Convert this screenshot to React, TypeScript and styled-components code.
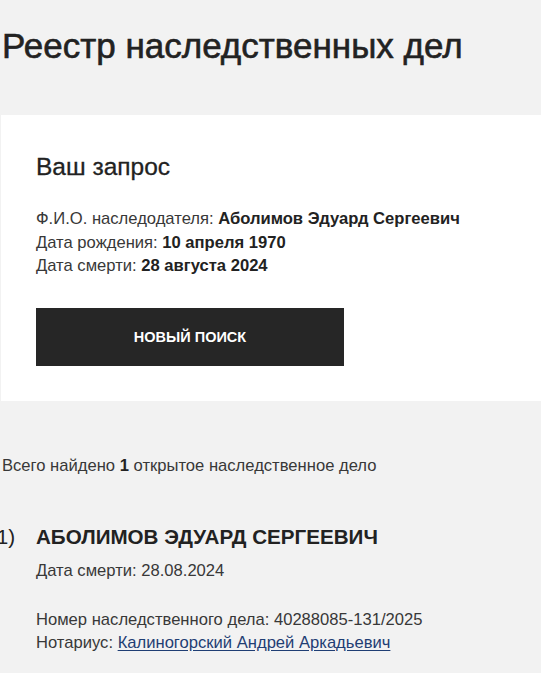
import React from "react";
import styled, { createGlobalStyle } from "styled-components";

const GlobalStyle = createGlobalStyle`
  html, body {
    margin: 0;
    padding: 0;
    background: #f2f2f2;
    font-family: "Liberation Sans", Arial, sans-serif;
    color: #222;
  }
  * { box-sizing: border-box; }
`;

const Page = styled.main`
  padding: 0 0 0 2px;
  overflow: hidden;
`;

const Title = styled.h1`
  margin: 0;
  padding-top: 26px;
  font-size: 35px;
  font-weight: 500;
  line-height: 40px;
  color: #222;
  -webkit-text-stroke: 0.6px #222;
`;

const Card = styled.section`
  margin: 49px 0 0 -1px;
  background: #fff;
  padding: 37px 35px 35px 35px;
`;

const CardTitle = styled.h2`
  margin: 0;
  font-size: 24.5px;
  font-weight: 400;
  line-height: 30px;
  color: #222;
  -webkit-text-stroke: 0.3px #222;
`;

const InfoList = styled.div`
  margin-top: 25px;
  font-size: 16.6px;
  line-height: 23.5px;
  color: #383838;
`;

const InfoLine = styled.div`
  b {
    font-weight: 700;
    color: #222;
  }
`;

const Button = styled.button`
  display: block;
  margin-top: 30px;
  width: 308px;
  height: 58px;
  border: 0;
  background: #262626;
  color: #fff;
  font-family: "Liberation Sans", Arial, sans-serif;
  font-size: 14.5px;
  font-weight: 700;
  text-transform: uppercase;
  cursor: pointer;
`;

const Summary = styled.p`
  margin: 53px 0 0;
  font-size: 16.6px;
  line-height: 24px;
  color: #383838;
  b { color: #222; }
`;

const Result = styled.div`
  margin-top: 45px;
  display: grid;
  grid-template-columns: 34px 1fr;
  align-items: start;
`;

const ResultNumber = styled.span`
  justify-self: end;
  padding-right: 21px;
  font-size: 20.6px;
  line-height: 28px;
  color: #222;
`;

const ResultBody = styled.div`
  display: flex;
  flex-direction: column;
`;

const ResultName = styled.h3`
  margin: 0;
  font-size: 20.6px;
  font-weight: 700;
  line-height: 28px;
  color: #222;
`;

const ResultLine = styled.div<{ $gap?: number }>`
  margin-top: ${(p) => p.$gap ?? 0}px;
  font-size: 16.6px;
  line-height: 22.5px;
  color: #383838;
`;

const NotaryLink = styled.a`
  color: #1f3e74;
  text-decoration: underline;
  text-underline-offset: 2px;
`;

export default function App() {
  return (
    <>
      <GlobalStyle />
      <Page>
        <Title>Реестр наследственных дел</Title>
        <Card>
          <CardTitle>Ваш запрос</CardTitle>
          <InfoList>
            <InfoLine>
              Ф.И.О. наследодателя: <b>Аболимов Эдуард Сергеевич</b>
            </InfoLine>
            <InfoLine>
              Дата рождения: <b>10 апреля 1970</b>
            </InfoLine>
            <InfoLine>
              Дата смерти: <b>28 августа 2024</b>
            </InfoLine>
          </InfoList>
          <Button type="button">Новый поиск</Button>
        </Card>
        <Summary>
          Всего найдено <b>1</b> открытое наследственное дело
        </Summary>
        <Result>
          <ResultNumber>1)</ResultNumber>
          <ResultBody>
            <ResultName>АБОЛИМОВ ЭДУАРД СЕРГЕЕВИЧ</ResultName>
            <ResultLine $gap={9}>Дата смерти: 28.08.2024</ResultLine>
            <ResultLine $gap={27}>Номер наследственного дела: 40288085-131/2025</ResultLine>
            <ResultLine>
              Нотариус: <NotaryLink href="#">Калиногорский Андрей Аркадьевич</NotaryLink>
            </ResultLine>
          </ResultBody>
        </Result>
      </Page>
    </>
  );
}
